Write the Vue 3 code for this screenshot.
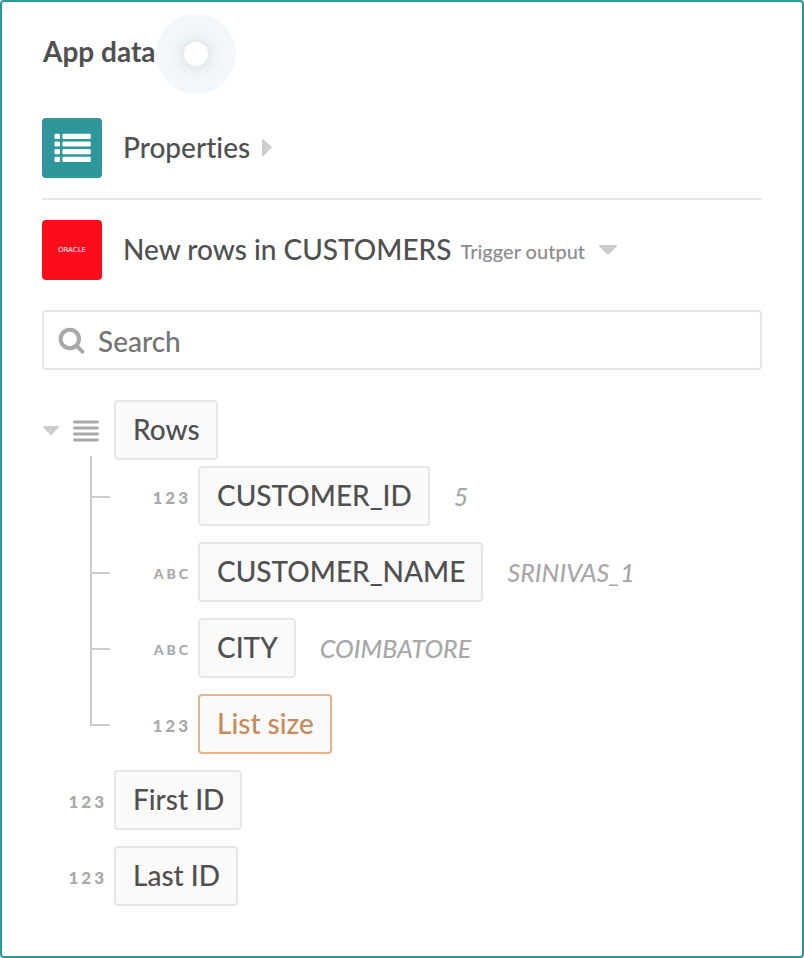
<script setup>
import { ref } from 'vue'

const query = ref('')

const children = [
  { type: '123', label: 'CUSTOMER_ID', value: '5' },
  { type: 'ABC', label: 'CUSTOMER_NAME', value: 'SRINIVAS_1' },
  { type: 'ABC', label: 'CITY', value: 'COIMBATORE' },
  { type: '123', label: 'List size', formula: true },
]

const fields = [
  { type: '123', label: 'First ID' },
  { type: '123', label: 'Last ID' },
]
</script>

<template>
  <main class="panel">
    <header class="header">
      <h1 class="title">App data</h1>
      <span class="pulse"><span class="dot"></span></span>
    </header>

    <button type="button" class="source">
      <span class="tile">
        <svg width="38" height="30" viewBox="0 0 38 30" fill="#fff" aria-hidden="true">
          <g v-for="i in 4" :key="i">
            <rect x="1.5" :y="(i - 1) * 7.7 + 0.7" width="5.5" height="5.2" rx="1" />
            <rect x="9.4" :y="(i - 1) * 7.7 + 0.7" width="28.4" height="5.2" rx="1" />
          </g>
        </svg>
      </span>
      <span class="name">Properties</span>
      <svg class="caret-right" width="10" height="18" viewBox="0 0 10 18" aria-hidden="true">
        <path d="M0 0.5 L1 0 L10 8.6 L1 17.4 L0 17 Z" fill="#ccc" />
      </svg>
    </button>

    <hr class="divider" />

    <button type="button" class="source" aria-expanded="true">
      <span class="tile oracle">ORACLE</span>
      <span class="name">New rows in CUSTOMERS</span>
      <span class="hint">Trigger output</span>
      <svg class="caret-down" width="18" height="10" viewBox="0 0 18 10" aria-hidden="true">
        <path d="M0.4 0 H17.6 L18 1 L9 10 L0 1 Z" fill="#ccc" />
      </svg>
    </button>

    <label class="search">
      <svg width="28" height="28" viewBox="0 0 28 28" fill="none" stroke="#a8a8a8" aria-hidden="true">
        <circle cx="11.8" cy="13" r="9.2" stroke-width="4" />
        <path d="M18.4 19.6 L24.4 25.6" stroke-width="4" stroke-linecap="round" />
      </svg>
      <input v-model="query" type="text" placeholder="Search" aria-label="Search" />
    </label>

    <ul class="tree">
      <li>
        <div class="row">
          <span class="type list">
            <svg width="18" height="10" viewBox="0 0 18 10" aria-hidden="true">
              <path d="M1.4 0 H16.6 L17 1 L9 9.4 L1 1 Z" fill="#ccc" />
            </svg>
            <svg width="26" height="22" viewBox="0 0 26 22" aria-hidden="true">
              <path
                d="M1.5 2 H24.5 M1.5 8 H24.5 M1.5 14 H24.5 M1.5 20 H24.5"
                stroke="#a8a8a8" stroke-width="2.8" stroke-linecap="round"
              />
            </svg>
          </span>
          <button type="button" class="pill">Rows</button>
        </div>
        <ul class="branch">
          <li v-for="item in children" :key="item.label" class="row">
            <span class="type" :class="{ text: item.type === 'ABC' }">{{ item.type }}</span>
            <button type="button" class="pill" :class="{ formula: item.formula }">{{ item.label }}</button>
            <em v-if="item.value" class="value">{{ item.value }}</em>
          </li>
        </ul>
      </li>
      <li v-for="item in fields" :key="item.label" class="row">
        <span class="type">{{ item.type }}</span>
        <button type="button" class="pill">{{ item.label }}</button>
      </li>
    </ul>
  </main>
</template>

<style>
body {
  background: #fff;
}
</style>

<style scoped>
.panel {
  box-sizing: border-box;
  min-height: 100vh;
  padding: 12px 40px 50px;
  border: 2px solid #2e979b;
  border-radius: 4px;
  background: #fff;
  color: #505050;
  font-family: Lato, "Liberation Sans", sans-serif;
  font-size: 28px;
  font-weight: 500;
  font-variant-ligatures: none;
  line-height: 36px;
}

button {
  font: inherit;
  font-variant-ligatures: none;
  color: inherit;
  cursor: pointer;
}

.header {
  display: flex;
  align-items: center;
  height: 80px;
}

.title {
  margin: 0 0 6px;
  padding-left: 1px;
  font-size: 28px;
  font-weight: 700;
}

.pulse {
  display: flex;
  align-items: center;
  justify-content: center;
  width: 80px;
  height: 80px;
  border-radius: 50%;
  background: #f2f7fc;
}

.dot {
  width: 24px;
  height: 24px;
  border-radius: 50%;
  background: #fff;
  box-shadow: 0 0 16px rgba(80, 80, 80, 0.2);
}

.source {
  display: flex;
  align-items: center;
  width: 100%;
  padding: 0;
  border: 0;
  background: none;
  text-align: left;
}

.header + .source {
  margin-top: 24px;
}

.tile {
  display: flex;
  flex: none;
  align-items: center;
  justify-content: center;
  width: 60px;
  height: 60px;
  margin-right: 21px;
  border-radius: 4px;
  background: #2e979b;
}

.oracle {
  background: #fc0d1b;
  color: #fff;
  font-family: "DejaVu Sans", sans-serif;
  font-size: 7px;
  line-height: 8px;
}

.name {
  margin-bottom: 2px;
}

.caret-right {
  margin-left: 12px;
}

.hint {
  margin: 2px 0 0 9px;
  color: #8c8c8c;
  font-size: 20px;
}

.caret-down {
  margin-left: 14px;
}

.divider {
  height: 2px;
  margin: 20px 0;
  border: 0;
  background: #e6e6e6;
}

.search {
  display: flex;
  align-items: center;
  box-sizing: border-box;
  height: 60px;
  margin-top: 30px;
  padding: 0 14px;
  border: 2px solid #e6e6e6;
  border-radius: 4px;
}

.search input {
  flex: 1;
  min-width: 0;
  margin-left: 12px;
  padding: 2px 0 0;
  border: 0;
  outline: 0;
  background: none;
  color: #505050;
  font: inherit;
}

.search input::placeholder {
  color: #757575;
  opacity: 1;
}

.tree,
.branch {
  margin: 0;
  padding: 0;
  list-style: none;
}

.tree {
  display: grid;
  gap: 16px;
  margin-top: 30px;
}

.row {
  display: flex;
  align-items: center;
}

.type {
  box-sizing: border-box;
  flex: none;
  width: 72px;
  padding: 4px 7px 0 0;
  color: #a8a8a8;
  font-size: 17px;
  font-weight: 900;
  letter-spacing: 3px;
  text-align: right;
}

.type.text {
  font-size: 14px;
}

.type.list {
  display: flex;
  align-items: center;
  justify-content: space-between;
  padding: 2px 15px 0 0;
}

.pill {
  box-sizing: border-box;
  height: 60px;
  padding: 0 16px 2px 17px;
  border: 2px solid #e6e6e6;
  border-radius: 4px;
  background: #fafafa;
  white-space: nowrap;
}

.pill.formula {
  border-color: #e8b187;
  color: #c88a58;
}

.value {
  margin: 0 0 0 24px;
  color: #a8a8a8;
  font-size: 25px;
}

.branch {
  display: grid;
  gap: 16px;
  margin: 6px 0 0 48px;
}

.branch .row {
  position: relative;
  padding-left: 36px;
}

/* Elbow that joins each child to the one above it */
.branch .row::before {
  content: "";
  position: absolute;
  top: -44px;
  left: 0;
  box-sizing: border-box;
  width: 20px;
  height: 76px;
  border: solid #ccc;
  border-width: 0 0 2px 2px;
}

.branch .row:first-child::before {
  top: -10px;
  height: 42px;
}
</style>
